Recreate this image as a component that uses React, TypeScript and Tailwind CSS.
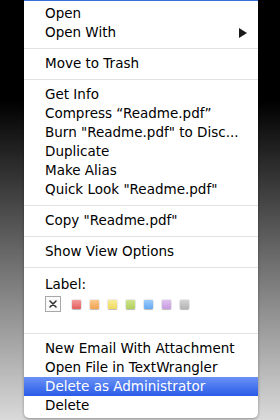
import { Fragment } from "react";

type Item = { label: string; submenu?: boolean; active?: boolean };

const font = { fontFamily: '"DejaVu Sans", "Lucida Grande", sans-serif' };

const groups: Item[][] = [
  [{ label: "Open" }, { label: "Open With", submenu: true }],
  [{ label: "Move to Trash" }],
  [
    { label: "Get Info" },
    { label: "Compress \u201CReadme.pdf\u201D" },
    { label: "Burn \"Readme.pdf\" to Disc..." },
    { label: "Duplicate" },
    { label: "Make Alias" },
    { label: "Quick Look \"Readme.pdf\"" },
  ],
  [{ label: "Copy \"Readme.pdf\"" }],
  [{ label: "Show View Options" }],
];

const tail: Item[] = [
  { label: "New Email With Attachment" },
  { label: "Open File in TextWrangler" },
  { label: "Delete as Administrator", active: true },
  { label: "Delete" },
];

const swatches = [
  "from-[#f49a9a] to-[#e35e5e]",
  "from-[#fbc98c] to-[#f2a24e]",
  "from-[#f8ee98] to-[#efd95c]",
  "from-[#d0e58c] to-[#b1cf5e]",
  "from-[#9ccbfa] to-[#66a9f2]",
  "from-[#e0c0f0] to-[#c79be0]",
  "from-[#d4d4d4] to-[#b4b4b4]",
];

function Separator() {
  return (
    <div className="flex h-[12px] items-center">
      <div className="h-px w-full bg-[#e2e2e2]" />
    </div>
  );
}

function Row({ item }: { item: Item }) {
  return (
    <div
      className={`flex h-[19px] items-center justify-between pl-[21px] pr-[11px] pt-px text-[13.5px] leading-none ${
        item.active
          ? "bg-gradient-to-b from-[#6a91f5] to-[#2a5ae8] text-white"
          : "text-black"
      }`}
    >
      <span className="whitespace-nowrap">{item.label}</span>
      {item.submenu && (
        <svg width="8" height="10" viewBox="0 0 8 10">
          <polygon points="0,0 8,5 0,10" fill="#1a1a1a" />
        </svg>
      )}
    </div>
  );
}

export default function App() {
  return (
    <div
      className="h-[420px] w-[280px] overflow-hidden bg-[linear-gradient(to_bottom,#000_24%,#dadada_100%)]"
      style={font}
    >
      <div className="ml-[24px] flex w-[234px] flex-col rounded-b-[5px] bg-white pb-[3px] shadow-[0_1px_3px_rgba(0,0,0,0.35)]">
        <div className="mb-[3px] h-px bg-[#3a6fd8]" />
        {groups.map((g, i) => (
          <Fragment key={i}>
            {g.map((item) => (
              <Row key={item.label} item={item} />
            ))}
            <Separator />
          </Fragment>
        ))}

        <div className="flex h-[21px] items-center pl-[21px] pt-[3px] text-[13.5px] leading-none text-black">
          Label:
        </div>
        <div className="mb-[15px] mt-[2px] flex items-center pl-[21px]">
          <div className="flex h-[16px] w-[16px] items-center justify-center border border-[#a8a8a8] bg-[#fafafa]">
            <svg width="8" height="8" viewBox="0 0 8 8">
              <path d="M1 1 L7 7 M7 1 L1 7" stroke="#333" strokeWidth="1.6" strokeLinecap="round" />
            </svg>
          </div>
          <div className="ml-[11px] flex gap-[9px]">
            {swatches.map((c) => (
              <div
                key={c}
                className={`h-[9px] w-[9px] rounded-[1px] bg-gradient-to-b ${c} shadow-[0_0_0_1px_rgba(0,0,0,0.08),0_1px_1px_rgba(0,0,0,0.2)]`}
              />
            ))}
          </div>
        </div>
        <Separator />

        {tail.map((item) => (
          <Row key={item.label} item={item} />
        ))}
      </div>
    </div>
  );
}
